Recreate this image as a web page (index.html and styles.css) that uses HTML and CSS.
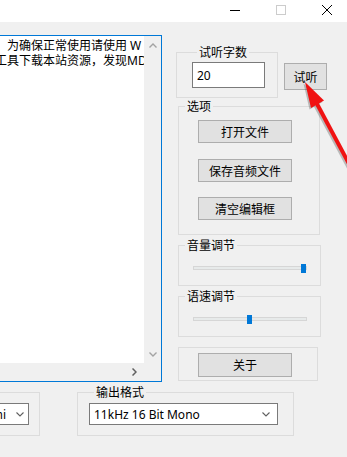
FILE: index.html
```html
<!DOCTYPE html>
<html>
<head>
    <title>语音合成</title>
    <link rel="stylesheet" href="styles.css">
</head>
<body>
    <div class="window">
        <div class="titlebar">
            <span class="win-btn">
                <svg width="10" height="10" viewBox="0 0 10 10"><line x1="0" y1="5.5" x2="10" y2="5.5" stroke="#000" stroke-width="1"/></svg>
            </span>
            <span class="win-btn">
                <svg width="10" height="10" viewBox="0 0 10 10"><rect x="0.5" y="0.5" width="9" height="9" fill="none" stroke="#cccccc" stroke-width="1"/></svg>
            </span>
            <span class="win-btn">
                <svg width="10" height="10" viewBox="0 0 10 10"><path d="M0 0 L10 10 M10 0 L0 10" stroke="#000" stroke-width="1"/></svg>
            </span>
        </div>

        <div class="top-row">
            <div class="editor">
                <div class="editor-text">
                    <div class="line line-first">为确保正常使用请使用 W</div>
                    <div class="line line-second">工具下载本站资源，发现MD</div>
                </div>
                <div class="vscroll">
                    <svg width="8" height="5" viewBox="0 0 8 5"><polyline points="0.5,4.5 4,1 7.5,4.5" fill="none" stroke="#a3a3a3" stroke-width="1.4"/></svg>
                    <svg width="8" height="5" viewBox="0 0 8 5"><polyline points="0.5,0.5 4,4 7.5,0.5" fill="none" stroke="#a3a3a3" stroke-width="1.4"/></svg>
                </div>
                <div class="hscroll">
                    <svg width="5" height="8" viewBox="0 0 5 8"><polyline points="0.5,0.5 4,4 0.5,7.5" fill="none" stroke="#606060" stroke-width="1.5"/></svg>
                </div>
                <div class="corner"></div>
            </div>

            <div class="side">
                <div class="listen-row">
                    <div class="group group-count">
                        <span class="group-label">试听字数</span>
                        <input class="count-input" type="text" value="20">
                    </div>
                    <button class="btn btn-listen">试听</button>
                </div>

                <div class="group group-options">
                    <span class="group-label">选项</span>
                    <button class="btn btn-option btn-open">打开文件</button>
                    <button class="btn btn-option btn-save">保存音频文件</button>
                    <button class="btn btn-option btn-clear">清空编辑框</button>
                </div>

                <div class="group group-slider">
                    <span class="group-label">音量调节</span>
                    <div class="track"><span class="thumb thumb-volume"></span></div>
                </div>

                <div class="group group-slider">
                    <span class="group-label">语速调节</span>
                    <div class="track"><span class="thumb thumb-speed"></span></div>
                </div>

                <div class="group group-about">
                    <button class="btn btn-option">关于</button>
                </div>
            </div>
        </div>

        <div class="bottom-row">
            <div class="group group-voice">
                <div class="combo combo-voice">
                    <span class="combo-text">hi</span>
                    <svg width="8" height="5" viewBox="0 0 8 5"><polyline points="0.5,0.5 4,4 7.5,0.5" fill="none" stroke="#606060" stroke-width="1.1"/></svg>
                </div>
            </div>
            <div class="group group-format">
                <span class="group-label">输出格式</span>
                <div class="combo combo-format">
                    <span class="combo-text">11kHz 16 Bit Mono</span>
                    <svg width="8" height="5" viewBox="0 0 8 5"><polyline points="0.5,0.5 4,4 7.5,0.5" fill="none" stroke="#606060" stroke-width="1.1"/></svg>
                </div>
            </div>
        </div>

        <svg class="pointer" width="347" height="457" viewBox="0 0 347 457">
            <g transform="translate(-1.5,1.5)" opacity="0.35">
                <line x1="316" y1="102" x2="362" y2="188" stroke="#555" stroke-width="4"/>
                <polygon points="305,82 311,108 324,100.5" fill="#555"/>
            </g>
            <line x1="316" y1="102" x2="362" y2="188" stroke="#f01212" stroke-width="4"/>
            <polygon points="305,82 311,108 324,100.5" fill="#f01212"/>
        </svg>
    </div>
</body>
</html>
```

FILE: styles.css
```css
* {
    box-sizing: border-box;
}

body {
    margin: 0;
    background-color: #f0f0f0;
    font-family: "Noto Sans", "Noto Sans CJK SC", sans-serif;
    font-size: 12px;
    color: #000;
    overflow: hidden;
}

.window {
    position: relative;
    width: 347px;
    height: 457px;
    overflow: hidden;
}

/* title bar */
.titlebar {
    height: 22px;
    background-color: #fff;
    display: flex;
    justify-content: flex-end;
    margin-right: -3px;
}

.win-btn {
    width: 46px;
    display: flex;
    justify-content: center;
    padding-top: 5px;
}

.win-btn svg {
    display: block;
}

.top-row {
    display: flex;
    align-items: flex-start;
    margin-top: 13px;
}

/* text editor */
.editor {
    width: 162px;
    height: 347px;
    border: 1px solid #0078d7;
    border-left: 0;
    display: grid;
    grid-template-columns: 144px 17px;
    grid-template-rows: 327px 18px;
    background-color: #fff;
    flex: none;
}

.editor-text {
    overflow: hidden;
    white-space: nowrap;
    padding-top: 2px;
}

.line {
    line-height: 15px;
    height: 15px;
}

.line-first {
    padding-left: 7px;
}

.line-second {
    margin-left: -5px;
}

.vscroll {
    background-color: #f0f0f0;
    display: flex;
    flex-direction: column;
    justify-content: space-between;
    align-items: center;
    padding: 7px 0 6px 0;
}

.vscroll svg,
.hscroll svg {
    display: block;
}

.hscroll {
    background-color: #f0f0f0;
    display: flex;
    justify-content: flex-end;
    align-items: center;
    padding-right: 7px;
}

.corner {
    background-color: #f0f0f0;
}

/* right column */
.side {
    margin-left: 14px;
    width: 160px;
}

.group {
    border: 1px solid #dcdcdc;
}

.group-label {
    display: block;
    width: max-content;
    margin: -8px 0 0 6px;
    padding: 0 2px;
    line-height: 15px;
    height: 15px;
    background-color: #f0f0f0;
}

.listen-row {
    display: flex;
    align-items: flex-start;
    margin-top: 17px;
}

.group-count {
    width: 102px;
    height: 46px;
    padding-left: 15px;
}

.group-count .group-label {
    margin-left: 5px;
}

.count-input {
    display: block;
    width: 73px;
    height: 26px;
    margin-top: 2px;
    border: 1px solid #7a7a7a;
    padding: 0 0 0 4px;
    font: inherit;
    background-color: #fff;
    outline: none;
}

.btn {
    background-color: #e1e1e1;
    border: 1px solid #adadad;
    font: inherit;
    color: #000;
    padding: 0;
    display: flex;
    align-items: center;
    justify-content: center;
}

.btn-listen {
    width: 43px;
    height: 27px;
    margin: 11px 0 0 6px;
}

.group-options {
    margin: 8px 0 0 2px;
    width: 142px;
    height: 129px;
}

.btn-option {
    width: 94px;
    height: 23px;
    margin-left: 19px;
}

.btn-open {
    margin-top: 6px;
}

.btn-save {
    margin-top: 16px;
}

.btn-clear {
    margin-top: 15px;
}

.group-slider {
    margin: 10px 0 0 2px;
    width: 143px;
    height: 41px;
}

.track {
    width: 114px;
    height: 4px;
    margin: 13px 0 0 14px;
    background-color: #e7eaea;
    border: 1px solid #d6d6d6;
    display: flex;
    align-items: center;
}

.thumb {
    flex: none;
    width: 5px;
    height: 9px;
    background-color: #0078d7;
}

.thumb-volume {
    margin-left: 107px;
}

.thumb-speed {
    margin-left: 53px;
}

.group-about {
    margin: 10px 0 0 2px;
    width: 140px;
    height: 34px;
    padding-top: 5px;
}

.group-about .btn-option {
    height: 24px;
}

/* bottom row */
.bottom-row {
    display: flex;
    margin-top: 10px;
}

.group-voice {
    width: 80px;
    height: 44px;
    margin-left: -40px;
    padding: 10px 10px 0 0;
    display: flex;
    justify-content: flex-end;
    align-items: flex-start;
}

.group-format {
    width: 217px;
    height: 44px;
    margin-left: 37px;
    padding-left: 11px;
}

.group-format .group-label {
    margin-left: 5px;
}

.combo {
    height: 22px;
    border: 1px solid #7a7a7a;
    background-color: #fff;
    display: flex;
    align-items: center;
    white-space: nowrap;
}

.combo svg {
    display: block;
    flex: none;
}

.combo-voice {
    width: 50px;
    justify-content: flex-end;
}

.combo-voice svg {
    margin: 0 4px 0 10px;
}

.combo-format {
    width: 189px;
    margin-top: 3px;
    padding-left: 4px;
}

.combo-format .combo-text {
    flex: 1;
}

.combo-format svg {
    margin-right: 7px;
}

.pointer {
    position: absolute;
    left: 0;
    top: 0;
    pointer-events: none;
}
```
